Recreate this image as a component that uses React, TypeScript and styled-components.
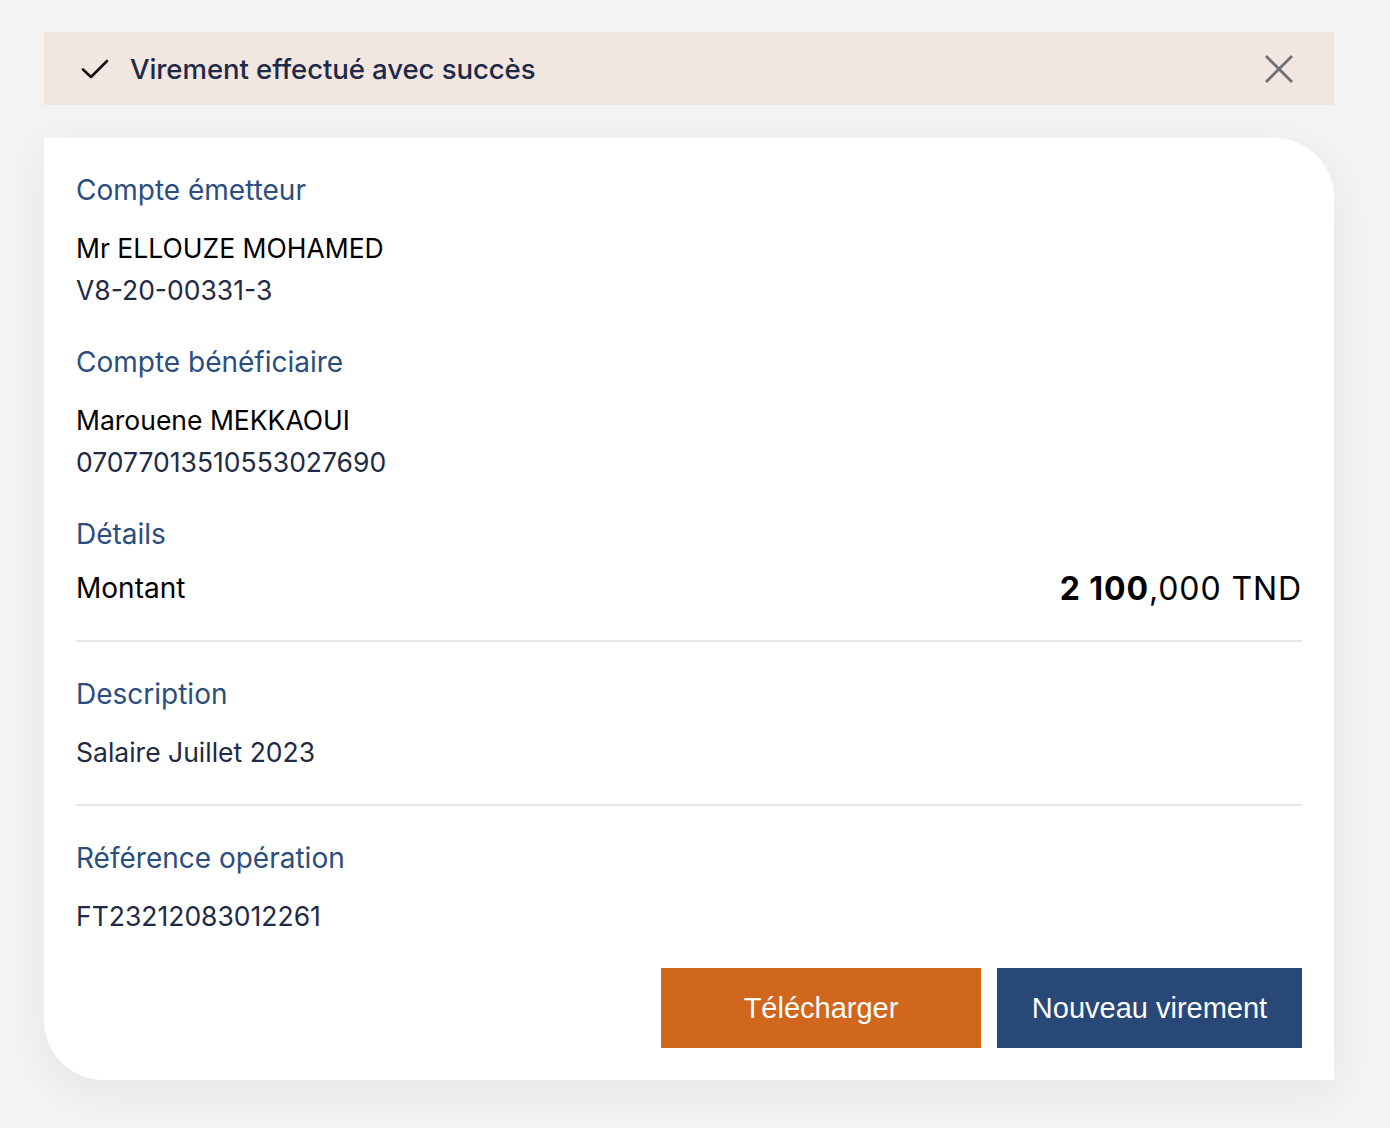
import styled, { createGlobalStyle } from 'styled-components';

const GlobalStyle = createGlobalStyle`
    body {
        margin: 0;
        background: #f3f3f3;
        font-family: Inter, "Noto Sans", sans-serif;
    }
`;

const Page = styled.div`
    width: 1290px;
    padding: 32px 0 48px 44px;
    display: flex;
    flex-direction: column;
    gap: 33px;
`;

const Banner = styled.div`
    height: 73px;
    background: #f2e6e1;
    display: flex;
    align-items: center;
    padding: 0 40px 0 36px;
    gap: 20px;
`;

const BannerText = styled.span`
    flex: 1;
    font-size: 27.6px;
    font-weight: 500;
    color: #1f2a48;
    letter-spacing: -0.1px;
`;

const CloseButton = styled.button`
    border: 0;
    background: none;
    padding: 0;
    display: flex;
    cursor: pointer;
`;

const Card = styled.div`
    background: #fff;
    border-radius: 0 60px 0 60px;
    box-shadow: 0 12px 40px rgba(0, 0, 0, 0.06);
    padding: 31px 32px 32px;
    display: flex;
    flex-direction: column;
`;

const Section = styled.div<{ $after?: number }>`
    display: flex;
    flex-direction: column;
    margin-bottom: ${p => p.$after ?? 0}px;
`;

const Label = styled.div<{ $gap?: number }>`
    font-size: 28px;
    line-height: 42px;
    color: #2b4e7e;
    margin-bottom: ${p => p.$gap ?? 16}px;
`;

const Value = styled.div<{ $tone?: 'black' | 'navy'; $size?: number }>`
    font-size: ${p => p.$size ?? 26.5}px;
    line-height: 42px;
    color: ${p => (p.$tone === 'black' ? '#000' : '#1f2a44')};
`;

const AmountRow = styled.div`
    display: flex;
    justify-content: space-between;
    align-items: center;
    height: 42px;
`;

const Amount = styled.span`
    font-size: 32px;
    letter-spacing: 0.9px;
    color: #000;
    b {
        font-weight: 700;
    }
`;

const Divider = styled.hr`
    border: 0;
    height: 2px;
    background: #e6e6e6;
    margin: 31px 0 31px;
`;

const Actions = styled.div`
    display: flex;
    justify-content: flex-end;
    gap: 16px;
    margin-top: 31px;
`;

const ActionButton = styled.button<{ $variant: 'orange' | 'navy'; $width: number }>`
    width: ${p => p.$width}px;
    height: 80px;
    border: 0;
    color: #fff;
    font-family: "Liberation Sans", Arial, sans-serif;
    font-size: 29px;
    background: ${p => (p.$variant === 'orange' ? '#d0671c' : '#284878')};
    cursor: pointer;
`;

function CheckIcon() {
    return (
        <svg width="30" height="24" viewBox="0 0 30 24" fill="none">
            <path d="M3 12.5 L11 20 L27 4" stroke="#111" strokeWidth="2.6" strokeLinecap="round" strokeLinejoin="round" />
        </svg>
    );
}

function CloseIcon() {
    return (
        <svg width="30" height="30" viewBox="0 0 30 30" fill="none">
            <path d="M2 2 L28 28 M28 2 L2 28" stroke="#707070" strokeWidth="2.8" />
        </svg>
    );
}

export default function App() {
    return (
        <>
            <GlobalStyle />
            <Page>
                <Banner>
                    <CheckIcon />
                    <BannerText>Virement effectué avec succès</BannerText>
                    <CloseButton aria-label="Fermer">
                        <CloseIcon />
                    </CloseButton>
                </Banner>
                <Card>
                    <Section $after={30}>
                        <Label>Compte émetteur</Label>
                        <Value $tone="black">Mr ELLOUZE MOHAMED</Value>
                        <Value>V8-20-00331-3</Value>
                    </Section>
                    <Section $after={30}>
                        <Label>Compte bénéficiaire</Label>
                        <Value $tone="black">Marouene MEKKAOUI</Value>
                        <Value>07077013510553027690</Value>
                    </Section>
                    <Section>
                        <Label $gap={12}>Détails</Label>
                        <AmountRow>
                            <Value $tone="black" $size={28}>Montant</Value>
                            <Amount><b>2 100</b>,000 TND</Amount>
                        </AmountRow>
                    </Section>
                    <Divider />
                    <Section>
                        <Label>Description</Label>
                        <Value>Salaire Juillet 2023</Value>
                    </Section>
                    <Divider />
                    <Section>
                        <Label>Référence opération</Label>
                        <Value>FT23212083012261</Value>
                    </Section>
                    <Actions>
                        <ActionButton $variant="orange" $width={320}>Télécharger</ActionButton>
                        <ActionButton $variant="navy" $width={305}>Nouveau virement</ActionButton>
                    </Actions>
                </Card>
            </Page>
        </>
    );
}
